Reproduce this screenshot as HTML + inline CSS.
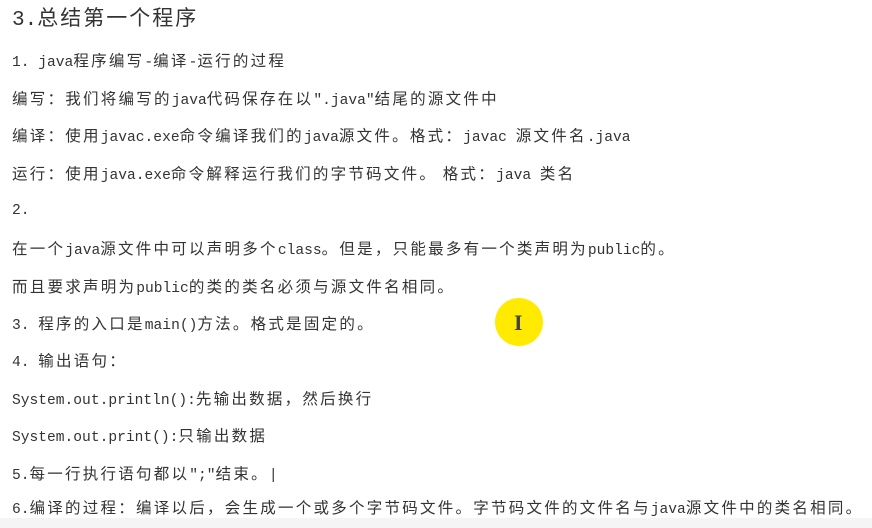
<html><head><style>
body{margin:0;width:872px;height:528px;background:#fff;overflow:hidden;position:relative;font-family:"Liberation Mono","Noto Sans CJK SC",monospace;color:#333;}
.l{position:absolute;left:12px;font-size:14.6px;white-space:nowrap;line-height:18px;}
.l span{font-family:"Noto Sans CJK SC",sans-serif;font-size:15.5px;letter-spacing:2.25px;}
h1{position:absolute;left:12px;top:3px;margin:0;font-weight:normal;font-size:21px;line-height:28px;font-family:"Liberation Mono","Noto Sans CJK SC",monospace;}
h1 span{font-family:'Noto Sans CJK SC',sans-serif;font-size:21px;letter-spacing:2px}
</style></head><body>
<h1>3.<span>总结第一个程序</span></h1>
<div class="l" style="top:51px">1. java<span>程序编写</span>-<span>编译</span>-<span>运行的过程</span></div>
<div class="l" style="top:89px"><span>编写：我们将编写的</span>java<span>代码保存在以</span>".java"<span>结尾的源文件中</span></div>
<div class="l" style="top:126px"><span>编译：使用</span>javac.exe<span>命令编译我们的</span>java<span>源文件。格式：</span>javac <span>源文件名</span>.java</div>
<div class="l" style="top:164px"><span>运行：使用</span>java.exe<span>命令解释运行我们的字节码文件。 格式：</span>java <span>类名</span></div>
<div class="l" style="top:202px">2.</div>
<div class="l" style="top:239px"><span>在一个</span>java<span>源文件中可以声明多个</span>class<span>。但是，只能最多有一个类声明为</span>public<span>的。</span></div>
<div class="l" style="top:277px"><span>而且要求声明为</span>public<span>的类的类名必须与源文件名相同。</span></div>
<div class="l" style="top:314px">3. <span>程序的入口是</span>main()<span>方法。格式是固定的。</span></div>
<div class="l" style="top:351px">4. <span>输出语句：</span></div>
<div class="l" style="top:389px">System.out.println():<span>先输出数据，然后换行</span></div>
<div class="l" style="top:426px">System.out.print():<span>只输出数据</span></div>
<div class="l" style="top:464px">5.<span>每一行执行语句都以</span>";"<span>结束。</span>|</div>
<div class="l" style="top:498px">6.<span>编译的过程：编译以后，会生成一个或多个字节码文件。字节码文件的文件名与</span>java<span>源文件中的类名相同。</span></div>
<div style="position:absolute;left:495px;top:298px;width:48px;height:48px;border-radius:50%;background:#ffea00;"></div>
<div style="position:absolute;left:514px;top:310px;font:bold 22px 'Liberation Serif',serif;color:#444;">I</div>
<div style="position:absolute;left:0;top:518px;width:872px;height:10px;background:#f5f5f5;"></div>
</body></html>
